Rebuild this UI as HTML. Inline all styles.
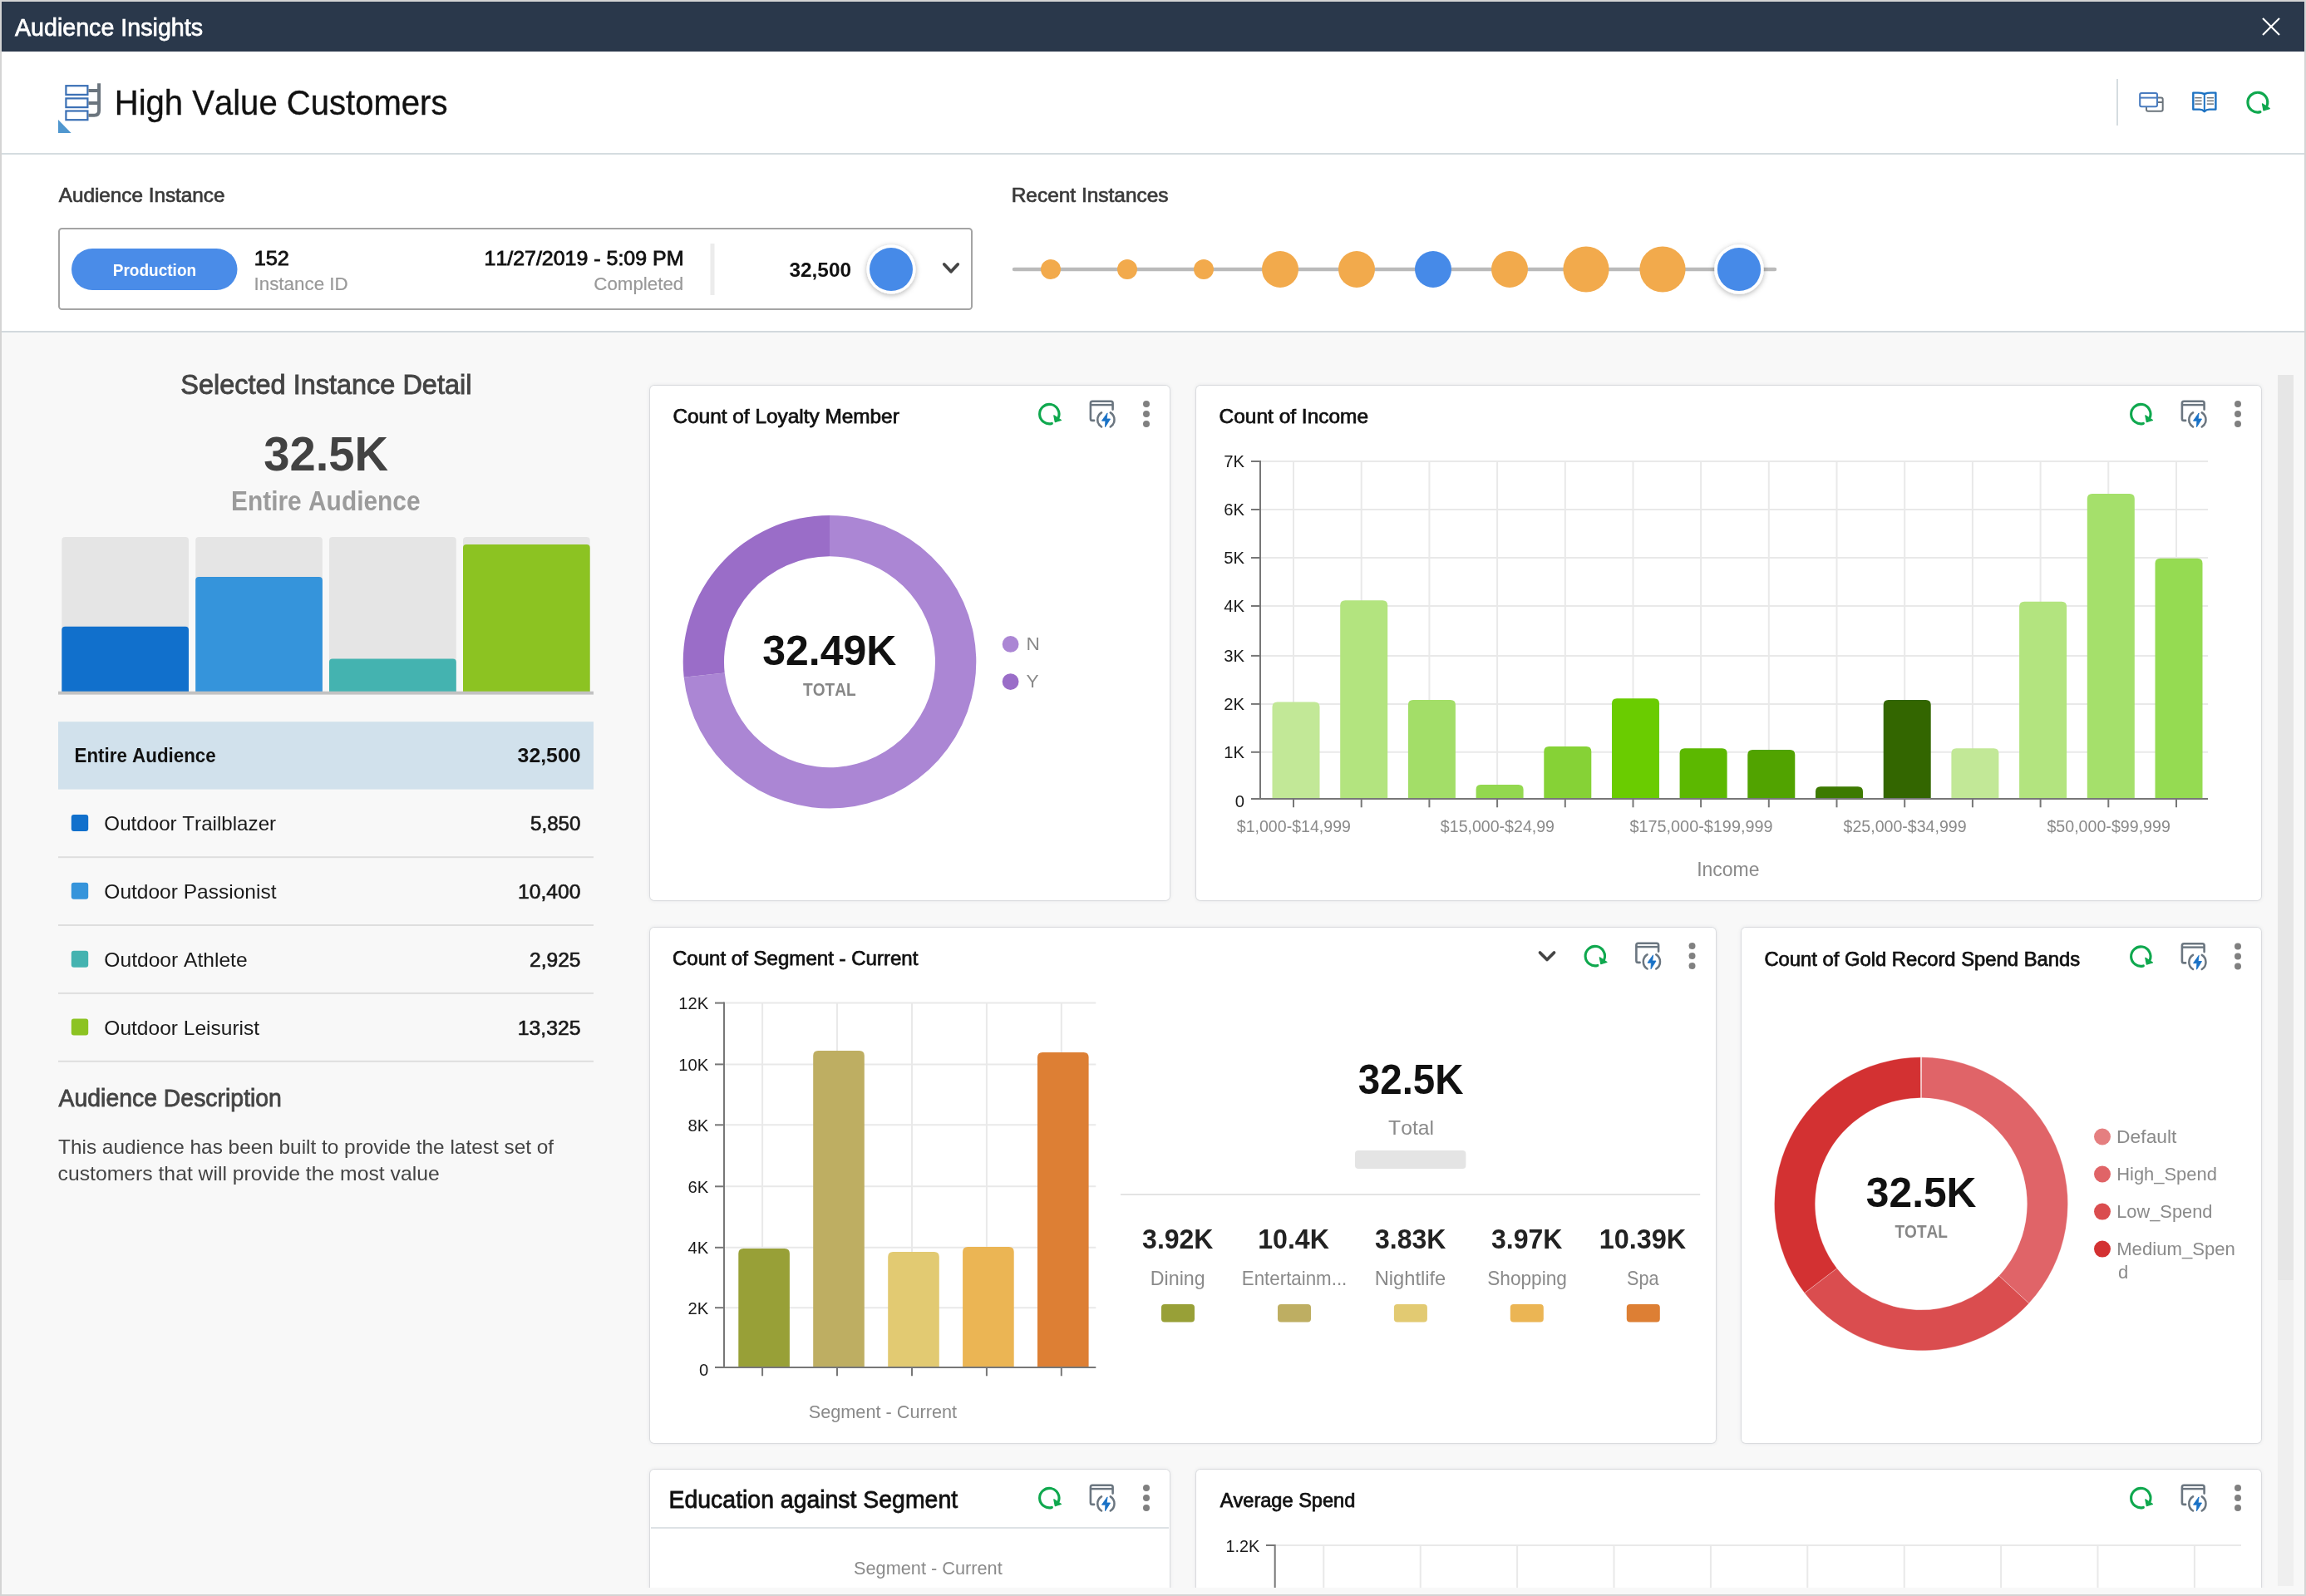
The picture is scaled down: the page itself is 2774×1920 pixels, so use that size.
<!DOCTYPE html>
<html><head><meta charset="utf-8"><title>Audience Insights</title>
<style>
html,body{margin:0;padding:0;}
body{width:2774px;height:1920px;position:relative;overflow:hidden;background:#d4d4d4;font-family:"Liberation Sans", sans-serif;}
.win{position:absolute;left:2px;top:2px;width:2770px;height:1916px;background:#f8f8f8;overflow:hidden;}
.titlebar{position:absolute;left:0;top:0;width:2770px;height:60px;background:#2a384b;}
.header{position:absolute;left:0;top:60px;width:2770px;height:122px;background:#fff;border-bottom:2px solid #d5dce0;}
.inst{position:absolute;left:0;top:184px;width:2770px;height:212px;background:#fff;border-bottom:2px solid #d2d9dd;}
.content{position:absolute;left:0;top:398px;width:2770px;height:1510px;overflow:hidden;}
.card{position:absolute;background:#fff;border-radius:5px;box-shadow:0 0 0 1px rgba(60,70,90,0.10),0 0 5px rgba(60,70,90,0.14);}
.sb{position:absolute;left:2738px;top:449px;width:19px;height:1089px;background:#e6e6e6;}
.sbt{position:absolute;left:2738px;top:1538px;width:19px;height:368px;background:#efefef;}
svg.ov{position:absolute;left:0;top:0;will-change:transform;}
svg.ov text{font-family:"Liberation Sans", sans-serif;font-kerning:none;}
</style></head>
<body>
<div class="win">
<div class="titlebar"></div>
<div class="header"></div>
<div class="inst"></div>
<div class="content">
<div style="position:absolute;left:-2px;top:-400px;width:2774px;height:1920px;">
<div class="card" style="left:782px;top:464px;width:625px;height:619px"></div>
<div class="card" style="left:1439px;top:464px;width:1281px;height:619px"></div>
<div class="card" style="left:782px;top:1116px;width:1282px;height:620px"></div>
<div class="card" style="left:2095px;top:1116px;width:625px;height:620px"></div>
<div class="card" style="left:782px;top:1768px;width:625px;height:192px"></div>
<div class="card" style="left:1439px;top:1768px;width:1281px;height:192px"></div>
</div>
</div>
<div class="sb"></div><div class="sbt"></div>
</div>
<svg class="ov" width="2774" height="1920" viewBox="0 0 2774 1920">
<defs><filter id="sh" x="-50%" y="-50%" width="200%" height="200%"><feDropShadow dx="0" dy="1.5" stdDeviation="3.2" flood-color="#000" flood-opacity="0.3"/></filter>
<clipPath id="cc"><rect x="0" y="400" width="2774" height="1510"/></clipPath></defs>
<g>
<text x="17.94" y="43.0" font-size="29.50" fill="#ffffff" textLength="226.09" lengthAdjust="spacingAndGlyphs" stroke="#ffffff" stroke-width="0.75">Audience Insights</text>
<line x1="2722.0" y1="22.0" x2="2742.0" y2="42.0" stroke="#ffffff" stroke-width="2.2" stroke-linecap="butt"/>
<line x1="2742.0" y1="22.0" x2="2722.0" y2="42.0" stroke="#ffffff" stroke-width="2.2" stroke-linecap="butt"/>
<rect x="79.4" y="103.2" width="26.0" height="10.7" fill="none" rx="0" stroke="#3b70b5" stroke-width="2.2"/>
<rect x="79.4" y="118.4" width="26.0" height="10.7" fill="none" rx="0" stroke="#3b70b5" stroke-width="2.2"/>
<rect x="79.4" y="133.5" width="26.0" height="10.7" fill="none" rx="0" stroke="#3b70b5" stroke-width="2.2"/>
<path d="M119.1,100.3 V133 Q119.1,138.7 113.4,138.7 H106.4" fill="none" stroke="#6b757e" stroke-width="4"/>
<line x1="106.4" y1="109.0" x2="119.1" y2="109.0" stroke="#6b757e" stroke-width="4" stroke-linecap="butt"/>
<line x1="106.4" y1="124.0" x2="119.1" y2="124.0" stroke="#6b757e" stroke-width="4" stroke-linecap="butt"/>
<path d="M70,144.1 L70,160 L85.6,160 Z" fill="#5097cf"/>
<text x="137.71" y="138.0" font-size="42.50" fill="#111111" textLength="400.73" lengthAdjust="spacingAndGlyphs" stroke="#111111" stroke-width="0.35">High Value Customers</text>
<rect x="2546.0" y="95.0" width="2.0" height="56.0" fill="#d5dce0" rx="0" />
<rect x="2582" y="117.5" width="19.7" height="16.2" rx="2" fill="none" stroke="#6b747c" stroke-width="2"/>
<line x1="2595.0" y1="123.0" x2="2601.7" y2="123.0" stroke="#6b747c" stroke-width="2" stroke-linecap="butt"/>
<rect x="2574.2" y="112" width="20.8" height="16.2" rx="2" fill="#ffffff" stroke="#4a7cc0" stroke-width="2.1"/>
<line x1="2574.2" y1="117.6" x2="2595.0" y2="117.6" stroke="#4a7cc0" stroke-width="2" stroke-linecap="butt"/>
<path d="M2651.8,113 Q2648,111.6 2644,111.6 H2638.3 V131.6 H2646 Q2649.5,131.6 2651.8,134.2 Q2654.1,131.6 2657.6,131.6 H2665.4 V111.6 H2659.6 Q2655.6,111.6 2651.8,113 Z" fill="none" stroke="#1d72c2" stroke-width="2.4" stroke-linejoin="round"/>
<line x1="2651.8" y1="113.0" x2="2651.8" y2="133.0" stroke="#1d72c2" stroke-width="2" stroke-linecap="butt"/>
<line x1="2640.3" y1="117.7" x2="2648.6" y2="117.7" stroke="#6b747c" stroke-width="1.5" stroke-linecap="butt"/>
<line x1="2654.8" y1="117.7" x2="2663.0" y2="117.7" stroke="#6b747c" stroke-width="1.5" stroke-linecap="butt"/>
<line x1="2640.3" y1="121.3" x2="2648.6" y2="121.3" stroke="#6b747c" stroke-width="1.5" stroke-linecap="butt"/>
<line x1="2654.8" y1="121.3" x2="2663.0" y2="121.3" stroke="#6b747c" stroke-width="1.5" stroke-linecap="butt"/>
<line x1="2640.3" y1="125.1" x2="2648.6" y2="125.1" stroke="#6b747c" stroke-width="1.5" stroke-linecap="butt"/>
<line x1="2654.8" y1="125.1" x2="2663.0" y2="125.1" stroke="#6b747c" stroke-width="1.5" stroke-linecap="butt"/>
<path d="M2718.93,134.65 A11.91,11.91 0 1 1 2726.89,127.61" fill="none" stroke="#0fa84e" stroke-width="3.16" stroke-linecap="round"/>
<path d="M2721.44,124.88 L2730.30,130.58 L2722.97,132.82 Z" fill="#0fa84e" stroke="#0fa84e" stroke-width="1.22" stroke-linejoin="round"/>
<text x="70.75" y="243.0" font-size="24.00" fill="#3a3a3a" textLength="199.73" lengthAdjust="spacingAndGlyphs" stroke="#3a3a3a" stroke-width="0.7">Audience Instance</text>
<rect x="71" y="275" width="1098" height="97" rx="3.5" fill="#ffffff" stroke="#a4a4a4" stroke-width="2"/>
<rect x="86.0" y="299.0" width="199.5" height="50.0" fill="#4a8ce8" rx="25" />
<text x="135.73" y="332.0" font-size="20.25" fill="#ffffff" textLength="100.45" lengthAdjust="spacingAndGlyphs" font-weight="bold">Production</text>
<text x="305.67" y="319.0" font-size="24.00" fill="#111111" textLength="42.20" lengthAdjust="spacingAndGlyphs" stroke="#111111" stroke-width="0.8">152</text>
<text x="305.54" y="349.0" font-size="22.00" fill="#999999" textLength="113.13" lengthAdjust="spacingAndGlyphs" stroke="#999999" stroke-width="0.2">Instance ID</text>
<text x="582.50" y="319.0" font-size="24.00" fill="#111111" textLength="239.95" lengthAdjust="spacingAndGlyphs" stroke="#111111" stroke-width="0.8">11/27/2019 - 5:09 PM</text>
<text x="714.27" y="349.0" font-size="22.00" fill="#999999" textLength="107.97" lengthAdjust="spacingAndGlyphs" stroke="#999999" stroke-width="0.2">Completed</text>
<rect x="854.5" y="293.0" width="5.0" height="62.0" fill="#ececec" rx="0" />
<text x="949.44" y="332.8" font-size="24.00" fill="#111111" textLength="74.56" lengthAdjust="spacingAndGlyphs" font-weight="bold">32,500</text>
<circle cx="1072.0" cy="324.0" r="29.5" fill="#ffffff" filter="url(#sh)"/>
<circle cx="1072.0" cy="324.0" r="26.0" fill="#468ae8" />
<path d="M1135.8,318 L1144,326.8 L1152.2,318" fill="none" stroke="#444" stroke-width="3.8" stroke-linecap="round" stroke-linejoin="round"/>
<text x="1216.69" y="243.0" font-size="24.00" fill="#3a3a3a" textLength="188.89" lengthAdjust="spacingAndGlyphs" stroke="#3a3a3a" stroke-width="0.7">Recent Instances</text>
<line x1="1220.0" y1="324.0" x2="2135.0" y2="324.0" stroke="#bababa" stroke-width="4.5" stroke-linecap="round"/>
<circle cx="1264.0" cy="324.0" r="12.0" fill="#f2aa4c" />
<circle cx="1356.0" cy="324.0" r="12.0" fill="#f2aa4c" />
<circle cx="1448.0" cy="324.0" r="12.0" fill="#f2aa4c" />
<circle cx="1540.0" cy="324.0" r="22.0" fill="#f2aa4c" />
<circle cx="1632.0" cy="324.0" r="22.0" fill="#f2aa4c" />
<circle cx="1724.0" cy="324.0" r="22.0" fill="#468ae8" />
<circle cx="1816.0" cy="324.0" r="22.0" fill="#f2aa4c" />
<circle cx="1908.0" cy="324.0" r="27.6" fill="#f2aa4c" />
<circle cx="2000.0" cy="324.0" r="27.6" fill="#f2aa4c" />
<circle cx="2092.0" cy="324.0" r="29.8" fill="#ffffff" filter="url(#sh)"/>
<circle cx="2092.0" cy="324.0" r="26.1" fill="#468ae8" />
<text x="217.28" y="473.8" font-size="33.25" fill="#444444" textLength="350.15" lengthAdjust="spacingAndGlyphs" stroke="#444444" stroke-width="0.9">Selected Instance Detail</text>
<text x="317.31" y="565.5" font-size="57.50" fill="#424242" textLength="149.81" lengthAdjust="spacingAndGlyphs" font-weight="bold">32.5K</text>
<text x="278.05" y="614.0" font-size="33.25" fill="#9b9b9b" textLength="227.52" lengthAdjust="spacingAndGlyphs" font-weight="bold">Entire Audience</text>
<path d="M74.3,832.0 V650.0 Q74.3,646.0 78.3,646.0 H223.0 Q227.0,646.0 227.0,650.0 V832.0 Z" fill="#e5e5e5"/>
<path d="M74.3,832.0 V757.7 Q74.3,753.7 78.3,753.7 H223.0 Q227.0,753.7 227.0,757.7 V832.0 Z" fill="#1170cc"/>
<path d="M235.2,832.0 V650.0 Q235.2,646.0 239.2,646.0 H383.9 Q387.9,646.0 387.9,650.0 V832.0 Z" fill="#e5e5e5"/>
<path d="M235.2,832.0 V698.0 Q235.2,694.0 239.2,694.0 H383.9 Q387.9,694.0 387.9,698.0 V832.0 Z" fill="#3594db"/>
<path d="M396.0,832.0 V650.0 Q396.0,646.0 400.0,646.0 H544.8 Q548.8,646.0 548.8,650.0 V832.0 Z" fill="#e5e5e5"/>
<path d="M396.0,832.0 V796.5 Q396.0,792.5 400.0,792.5 H544.8 Q548.8,792.5 548.8,796.5 V832.0 Z" fill="#44b3b0"/>
<path d="M557.0,832.0 V650.0 Q557.0,646.0 561.0,646.0 H705.7 Q709.7,646.0 709.7,650.0 V832.0 Z" fill="#e5e5e5"/>
<path d="M557.0,832.0 V659.0 Q557.0,655.0 561.0,655.0 H705.7 Q709.7,655.0 709.7,659.0 V832.0 Z" fill="#8cc322"/>
<rect x="70.0" y="831.7" width="644.0" height="3.9" fill="#c2c2c2" rx="0" />
<rect x="70.0" y="868.2" width="644.0" height="81.4" fill="#d1e1ec" rx="0" />
<text x="89.50" y="917.4" font-size="24.00" fill="#111111" textLength="170.26" lengthAdjust="spacingAndGlyphs" font-weight="bold">Entire Audience</text>
<text x="622.63" y="917.4" font-size="24.00" fill="#111111" textLength="75.89" lengthAdjust="spacingAndGlyphs" font-weight="bold">32,500</text>
<rect x="85.8" y="980.0" width="20.4" height="20.0" fill="#1170cc" rx="3" />
<text x="125.36" y="999.4" font-size="24.00" fill="#1a1a1a" textLength="206.75" lengthAdjust="spacingAndGlyphs">Outdoor Trailblazer</text>
<text x="638.03" y="999.4" font-size="24.00" fill="#1a1a1a" textLength="60.41" lengthAdjust="spacingAndGlyphs" stroke="#1a1a1a" stroke-width="0.65">5,850</text>
<rect x="70.0" y="1030.2" width="644.0" height="2.0" fill="#dedede" rx="0" />
<rect x="85.8" y="1061.8" width="20.4" height="20.0" fill="#3594db" rx="3" />
<text x="125.34" y="1081.2" font-size="24.00" fill="#1a1a1a" textLength="207.14" lengthAdjust="spacingAndGlyphs">Outdoor Passionist</text>
<text x="623.12" y="1081.2" font-size="24.00" fill="#1a1a1a" textLength="75.34" lengthAdjust="spacingAndGlyphs" stroke="#1a1a1a" stroke-width="0.65">10,400</text>
<rect x="70.0" y="1112.0" width="644.0" height="2.0" fill="#dedede" rx="0" />
<rect x="85.8" y="1143.7" width="20.4" height="20.0" fill="#44b3b0" rx="3" />
<text x="125.34" y="1163.1" font-size="24.00" fill="#1a1a1a" textLength="172.26" lengthAdjust="spacingAndGlyphs">Outdoor Athlete</text>
<text x="637.06" y="1163.1" font-size="24.00" fill="#1a1a1a" textLength="61.47" lengthAdjust="spacingAndGlyphs" stroke="#1a1a1a" stroke-width="0.65">2,925</text>
<rect x="70.0" y="1193.9" width="644.0" height="2.0" fill="#dedede" rx="0" />
<rect x="85.8" y="1225.5" width="20.4" height="20.0" fill="#8cc322" rx="3" />
<text x="125.34" y="1245.0" font-size="24.00" fill="#1a1a1a" textLength="186.84" lengthAdjust="spacingAndGlyphs">Outdoor Leisurist</text>
<text x="622.81" y="1245.0" font-size="24.00" fill="#1a1a1a" textLength="75.73" lengthAdjust="spacingAndGlyphs" stroke="#1a1a1a" stroke-width="0.65">13,325</text>
<rect x="70.0" y="1275.8" width="644.0" height="2.0" fill="#dedede" rx="0" />
<text x="70.54" y="1331.0" font-size="29.50" fill="#444444" textLength="268.40" lengthAdjust="spacingAndGlyphs" stroke="#444444" stroke-width="0.8">Audience Description</text>
<text x="70.05" y="1387.8" font-size="24.00" fill="#444444" textLength="596.01" lengthAdjust="spacingAndGlyphs">This audience has been built to provide the latest set of</text>
<text x="69.55" y="1420.3" font-size="24.00" fill="#444444" textLength="459.15" lengthAdjust="spacingAndGlyphs">customers that will provide the most value</text>
<text x="809.46" y="509.3" font-size="24.00" fill="#111111" textLength="272.34" lengthAdjust="spacingAndGlyphs" stroke="#111111" stroke-width="0.75">Count of Loyalty Member</text>
<path d="M1265.33,509.40 A11.70,11.70 0 1 1 1273.15,502.48" fill="none" stroke="#0fa84e" stroke-width="3.10" stroke-linecap="round"/>
<path d="M1267.80,499.80 L1276.50,505.40 L1269.30,507.60 Z" fill="#0fa84e" stroke="#0fa84e" stroke-width="1.20" stroke-linejoin="round"/>
<path d="M1316.10,505.90 H1314.10 Q1311.90,505.90 1311.90,503.70 V485.00 Q1311.90,482.80 1314.10,482.80 H1336.40 Q1338.60,482.80 1338.60,485.00 V492.60" fill="none" stroke="#6b7680" stroke-width="2.6" stroke-linecap="round" stroke-linejoin="round"/>
<line x1="1311.9" y1="487.1" x2="1338.6" y2="487.1" stroke="#6b7680" stroke-width="2.4" stroke-linecap="butt"/>
<path d="M1325.05,513.47 A10.1,10.1 0 0 1 1325.05,496.33" fill="none" stroke="#6b7680" stroke-width="2.5" stroke-linecap="round"/>
<path d="M1335.75,496.33 A10.1,10.1 0 0 1 1335.75,513.47" fill="none" stroke="#6b7680" stroke-width="2.5" stroke-linecap="round"/>
<path d="M1332.10,496.90 L1325.50,506.20 L1329.90,506.20 L1329.50,513.70 L1335.50,504.00 L1331.10,504.00 Z" fill="#1a72c6" stroke="#1a72c6" stroke-width="0.9" stroke-linejoin="round"/>
<circle cx="1379.0" cy="486.0" r="4.0" fill="#808080" />
<circle cx="1379.0" cy="498.0" r="4.0" fill="#808080" />
<circle cx="1379.0" cy="510.0" r="4.0" fill="#808080" />
<path d="M998.00,619.90 A176.3,176.3 0 1 1 822.67,814.63 L871.70,809.48 A127,127 0 1 0 998.00,669.20 Z" fill="#ab86d4"/>
<path d="M822.67,814.63 A176.3,176.3 0 0 1 998.00,619.90 L998.00,669.20 A127,127 0 0 0 871.70,809.48 Z" fill="#9a6dc8"/>
<text x="917.30" y="800.0" font-size="50.00" fill="#111111" textLength="161.11" lengthAdjust="spacingAndGlyphs" font-weight="bold">32.49K</text>
<text x="966.09" y="837.0" font-size="22.00" fill="#878787" textLength="63.60" lengthAdjust="spacingAndGlyphs" font-weight="bold">TOTAL</text>
<circle cx="1215.6" cy="774.9" r="9.9" fill="#ab86d4" />
<circle cx="1215.6" cy="820.1" r="9.9" fill="#9a6dc8" />
<text x="1234.5" y="782.0" font-size="22.67" fill="#8a8a8a">N</text>
<text x="1234.5" y="827.2" font-size="22.67" fill="#8a8a8a">Y</text>
<text x="1466.56" y="508.7" font-size="24.00" fill="#111111" textLength="179.53" lengthAdjust="spacingAndGlyphs" stroke="#111111" stroke-width="0.75">Count of Income</text>
<path d="M2578.33,509.40 A11.70,11.70 0 1 1 2586.15,502.48" fill="none" stroke="#0fa84e" stroke-width="3.10" stroke-linecap="round"/>
<path d="M2580.80,499.80 L2589.50,505.40 L2582.30,507.60 Z" fill="#0fa84e" stroke="#0fa84e" stroke-width="1.20" stroke-linejoin="round"/>
<path d="M2629.10,505.90 H2627.10 Q2624.90,505.90 2624.90,503.70 V485.00 Q2624.90,482.80 2627.10,482.80 H2649.40 Q2651.60,482.80 2651.60,485.00 V492.60" fill="none" stroke="#6b7680" stroke-width="2.6" stroke-linecap="round" stroke-linejoin="round"/>
<line x1="2624.9" y1="487.1" x2="2651.6" y2="487.1" stroke="#6b7680" stroke-width="2.4" stroke-linecap="butt"/>
<path d="M2638.05,513.47 A10.1,10.1 0 0 1 2638.05,496.33" fill="none" stroke="#6b7680" stroke-width="2.5" stroke-linecap="round"/>
<path d="M2648.75,496.33 A10.1,10.1 0 0 1 2648.75,513.47" fill="none" stroke="#6b7680" stroke-width="2.5" stroke-linecap="round"/>
<path d="M2645.10,496.90 L2638.50,506.20 L2642.90,506.20 L2642.50,513.70 L2648.50,504.00 L2644.10,504.00 Z" fill="#1a72c6" stroke="#1a72c6" stroke-width="0.9" stroke-linejoin="round"/>
<circle cx="2692.0" cy="486.0" r="4.0" fill="#808080" />
<circle cx="2692.0" cy="498.0" r="4.0" fill="#808080" />
<circle cx="2692.0" cy="510.0" r="4.0" fill="#808080" />
<line x1="1517.0" y1="904.8" x2="2656.0" y2="904.8" stroke="#e9e9e9" stroke-width="2" stroke-linecap="butt"/>
<line x1="1517.0" y1="846.9" x2="2656.0" y2="846.9" stroke="#e9e9e9" stroke-width="2" stroke-linecap="butt"/>
<line x1="1517.0" y1="788.9" x2="2656.0" y2="788.9" stroke="#e9e9e9" stroke-width="2" stroke-linecap="butt"/>
<line x1="1517.0" y1="729.0" x2="2656.0" y2="729.0" stroke="#e9e9e9" stroke-width="2" stroke-linecap="butt"/>
<line x1="1517.0" y1="671.0" x2="2656.0" y2="671.0" stroke="#e9e9e9" stroke-width="2" stroke-linecap="butt"/>
<line x1="1517.0" y1="613.0" x2="2656.0" y2="613.0" stroke="#e9e9e9" stroke-width="2" stroke-linecap="butt"/>
<line x1="1517.0" y1="555.0" x2="2656.0" y2="555.0" stroke="#e9e9e9" stroke-width="2" stroke-linecap="butt"/>
<line x1="1556.0" y1="555.0" x2="1556.0" y2="961.1" stroke="#e9e9e9" stroke-width="2" stroke-linecap="butt"/>
<line x1="1637.7" y1="555.0" x2="1637.7" y2="961.1" stroke="#e9e9e9" stroke-width="2" stroke-linecap="butt"/>
<line x1="1719.4" y1="555.0" x2="1719.4" y2="961.1" stroke="#e9e9e9" stroke-width="2" stroke-linecap="butt"/>
<line x1="1801.1" y1="555.0" x2="1801.1" y2="961.1" stroke="#e9e9e9" stroke-width="2" stroke-linecap="butt"/>
<line x1="1882.8" y1="555.0" x2="1882.8" y2="961.1" stroke="#e9e9e9" stroke-width="2" stroke-linecap="butt"/>
<line x1="1964.5" y1="555.0" x2="1964.5" y2="961.1" stroke="#e9e9e9" stroke-width="2" stroke-linecap="butt"/>
<line x1="2046.1" y1="555.0" x2="2046.1" y2="961.1" stroke="#e9e9e9" stroke-width="2" stroke-linecap="butt"/>
<line x1="2127.8" y1="555.0" x2="2127.8" y2="961.1" stroke="#e9e9e9" stroke-width="2" stroke-linecap="butt"/>
<line x1="2209.5" y1="555.0" x2="2209.5" y2="961.1" stroke="#e9e9e9" stroke-width="2" stroke-linecap="butt"/>
<line x1="2291.2" y1="555.0" x2="2291.2" y2="961.1" stroke="#e9e9e9" stroke-width="2" stroke-linecap="butt"/>
<line x1="2372.9" y1="555.0" x2="2372.9" y2="961.1" stroke="#e9e9e9" stroke-width="2" stroke-linecap="butt"/>
<line x1="2454.6" y1="555.0" x2="2454.6" y2="961.1" stroke="#e9e9e9" stroke-width="2" stroke-linecap="butt"/>
<line x1="2536.3" y1="555.0" x2="2536.3" y2="961.1" stroke="#e9e9e9" stroke-width="2" stroke-linecap="butt"/>
<line x1="2618.0" y1="555.0" x2="2618.0" y2="961.1" stroke="#e9e9e9" stroke-width="2" stroke-linecap="butt"/>
<path d="M1530.5,961.1 V850.5 Q1530.5,844.5 1536.5,844.5 H1581.5 Q1587.5,844.5 1587.5,850.5 V961.1 Z" fill="#c2e897"/>
<path d="M1612.2,961.1 V728.2 Q1612.2,722.2 1618.2,722.2 H1663.2 Q1669.2,722.2 1669.2,728.2 V961.1 Z" fill="#b3e47f"/>
<path d="M1693.9,961.1 V847.9 Q1693.9,841.9 1699.9,841.9 H1744.9 Q1750.9,841.9 1750.9,847.9 V961.1 Z" fill="#a3de68"/>
<path d="M1775.6,961.1 V950.0 Q1775.6,944.0 1781.6,944.0 H1826.6 Q1832.6,944.0 1832.6,950.0 V961.1 Z" fill="#93d84f"/>
<path d="M1857.3,961.1 V904.0 Q1857.3,898.0 1863.3,898.0 H1908.3 Q1914.3,898.0 1914.3,904.0 V961.1 Z" fill="#86d236"/>
<path d="M1939.0,961.1 V846.2 Q1939.0,840.2 1945.0,840.2 H1990.0 Q1996.0,840.2 1996.0,846.2 V961.1 Z" fill="#6acc00"/>
<path d="M2020.6,961.1 V906.3 Q2020.6,900.3 2026.6,900.3 H2071.6 Q2077.6,900.3 2077.6,906.3 V961.1 Z" fill="#5cb800"/>
<path d="M2102.3,961.1 V908.0 Q2102.3,902.0 2108.3,902.0 H2153.3 Q2159.3,902.0 2159.3,908.0 V961.1 Z" fill="#51a300"/>
<path d="M2184.0,961.1 V952.2 Q2184.0,946.2 2190.0,946.2 H2235.0 Q2241.0,946.2 2241.0,952.2 V961.1 Z" fill="#3d7a00"/>
<path d="M2265.7,961.1 V848.0 Q2265.7,842.0 2271.7,842.0 H2316.7 Q2322.7,842.0 2322.7,848.0 V961.1 Z" fill="#336600"/>
<path d="M2347.4,961.1 V906.3 Q2347.4,900.3 2353.4,900.3 H2398.4 Q2404.4,900.3 2404.4,906.3 V961.1 Z" fill="#c2e897"/>
<path d="M2429.1,961.1 V729.8 Q2429.1,723.8 2435.1,723.8 H2480.1 Q2486.1,723.8 2486.1,729.8 V961.1 Z" fill="#b3e47f"/>
<path d="M2510.8,961.1 V600.0 Q2510.8,594.0 2516.8,594.0 H2561.8 Q2567.8,594.0 2567.8,600.0 V961.1 Z" fill="#a5e06b"/>
<path d="M2592.5,961.1 V677.7 Q2592.5,671.7 2598.5,671.7 H2643.5 Q2649.5,671.7 2649.5,677.7 V961.1 Z" fill="#95db52"/>
<line x1="1505.0" y1="961.1" x2="1516.0" y2="961.1" stroke="#777777" stroke-width="2" stroke-linecap="butt"/>
<text x="1497.0" y="970.7" font-size="20.25" fill="#1a1a1a" text-anchor="end">0</text>
<line x1="1505.0" y1="904.8" x2="1516.0" y2="904.8" stroke="#777777" stroke-width="2" stroke-linecap="butt"/>
<text x="1497.0" y="911.6" font-size="20.25" fill="#1a1a1a" text-anchor="end">1K</text>
<line x1="1505.0" y1="846.9" x2="1516.0" y2="846.9" stroke="#777777" stroke-width="2" stroke-linecap="butt"/>
<text x="1497.0" y="853.7" font-size="20.25" fill="#1a1a1a" text-anchor="end">2K</text>
<line x1="1505.0" y1="788.9" x2="1516.0" y2="788.9" stroke="#777777" stroke-width="2" stroke-linecap="butt"/>
<text x="1497.0" y="795.7" font-size="20.25" fill="#1a1a1a" text-anchor="end">3K</text>
<line x1="1505.0" y1="729.0" x2="1516.0" y2="729.0" stroke="#777777" stroke-width="2" stroke-linecap="butt"/>
<text x="1497.0" y="735.8" font-size="20.25" fill="#1a1a1a" text-anchor="end">4K</text>
<line x1="1505.0" y1="671.0" x2="1516.0" y2="671.0" stroke="#777777" stroke-width="2" stroke-linecap="butt"/>
<text x="1497.0" y="677.8" font-size="20.25" fill="#1a1a1a" text-anchor="end">5K</text>
<line x1="1505.0" y1="613.0" x2="1516.0" y2="613.0" stroke="#777777" stroke-width="2" stroke-linecap="butt"/>
<text x="1497.0" y="619.8" font-size="20.25" fill="#1a1a1a" text-anchor="end">6K</text>
<line x1="1505.0" y1="555.0" x2="1516.0" y2="555.0" stroke="#777777" stroke-width="2" stroke-linecap="butt"/>
<text x="1497.0" y="561.8" font-size="20.25" fill="#1a1a1a" text-anchor="end">7K</text>
<line x1="1516.0" y1="554.0" x2="1516.0" y2="962.1" stroke="#777777" stroke-width="2" stroke-linecap="butt"/>
<line x1="1505.0" y1="961.1" x2="2656.0" y2="961.1" stroke="#777777" stroke-width="2" stroke-linecap="butt"/>
<line x1="1556.0" y1="961.1" x2="1556.0" y2="971.3" stroke="#777777" stroke-width="2" stroke-linecap="butt"/>
<line x1="1637.7" y1="961.1" x2="1637.7" y2="971.3" stroke="#777777" stroke-width="2" stroke-linecap="butt"/>
<line x1="1719.4" y1="961.1" x2="1719.4" y2="971.3" stroke="#777777" stroke-width="2" stroke-linecap="butt"/>
<line x1="1801.1" y1="961.1" x2="1801.1" y2="971.3" stroke="#777777" stroke-width="2" stroke-linecap="butt"/>
<line x1="1882.8" y1="961.1" x2="1882.8" y2="971.3" stroke="#777777" stroke-width="2" stroke-linecap="butt"/>
<line x1="1964.5" y1="961.1" x2="1964.5" y2="971.3" stroke="#777777" stroke-width="2" stroke-linecap="butt"/>
<line x1="2046.1" y1="961.1" x2="2046.1" y2="971.3" stroke="#777777" stroke-width="2" stroke-linecap="butt"/>
<line x1="2127.8" y1="961.1" x2="2127.8" y2="971.3" stroke="#777777" stroke-width="2" stroke-linecap="butt"/>
<line x1="2209.5" y1="961.1" x2="2209.5" y2="971.3" stroke="#777777" stroke-width="2" stroke-linecap="butt"/>
<line x1="2291.2" y1="961.1" x2="2291.2" y2="971.3" stroke="#777777" stroke-width="2" stroke-linecap="butt"/>
<line x1="2372.9" y1="961.1" x2="2372.9" y2="971.3" stroke="#777777" stroke-width="2" stroke-linecap="butt"/>
<line x1="2454.6" y1="961.1" x2="2454.6" y2="971.3" stroke="#777777" stroke-width="2" stroke-linecap="butt"/>
<line x1="2536.3" y1="961.1" x2="2536.3" y2="971.3" stroke="#777777" stroke-width="2" stroke-linecap="butt"/>
<line x1="2618.0" y1="961.1" x2="2618.0" y2="971.3" stroke="#777777" stroke-width="2" stroke-linecap="butt"/>
<text x="1487.79" y="1001.0" font-size="20.25" fill="#8a8a8a" textLength="137.14" lengthAdjust="spacingAndGlyphs">$1,000-$14,999</text>
<text x="1732.86" y="1001.0" font-size="20.25" fill="#8a8a8a" textLength="137.14" lengthAdjust="spacingAndGlyphs">$15,000-$24,99</text>
<text x="1960.43" y="1001.0" font-size="20.25" fill="#8a8a8a" textLength="172.15" lengthAdjust="spacingAndGlyphs">$175,000-$199,999</text>
<text x="2217.50" y="1001.0" font-size="20.25" fill="#8a8a8a" textLength="148.14" lengthAdjust="spacingAndGlyphs">$25,000-$34,999</text>
<text x="2462.42" y="1001.0" font-size="20.25" fill="#8a8a8a" textLength="148.44" lengthAdjust="spacingAndGlyphs">$50,000-$99,999</text>
<text x="2041.18" y="1054.4" font-size="23.40" fill="#8a8a8a" textLength="75.34" lengthAdjust="spacingAndGlyphs">Income</text>
<text x="808.98" y="1161.0" font-size="24.00" fill="#111111" textLength="295.40" lengthAdjust="spacingAndGlyphs" stroke="#111111" stroke-width="0.75">Count of Segment - Current</text>
<path d="M1921.83,1161.40 A11.70,11.70 0 1 1 1929.65,1154.48" fill="none" stroke="#0fa84e" stroke-width="3.10" stroke-linecap="round"/>
<path d="M1924.30,1151.80 L1933.00,1157.40 L1925.80,1159.60 Z" fill="#0fa84e" stroke="#0fa84e" stroke-width="1.20" stroke-linejoin="round"/>
<path d="M1972.60,1157.90 H1970.60 Q1968.40,1157.90 1968.40,1155.70 V1137.00 Q1968.40,1134.80 1970.60,1134.80 H1992.90 Q1995.10,1134.80 1995.10,1137.00 V1144.60" fill="none" stroke="#6b7680" stroke-width="2.6" stroke-linecap="round" stroke-linejoin="round"/>
<line x1="1968.4" y1="1139.1" x2="1995.1" y2="1139.1" stroke="#6b7680" stroke-width="2.4" stroke-linecap="butt"/>
<path d="M1981.55,1165.47 A10.1,10.1 0 0 1 1981.55,1148.33" fill="none" stroke="#6b7680" stroke-width="2.5" stroke-linecap="round"/>
<path d="M1992.25,1148.33 A10.1,10.1 0 0 1 1992.25,1165.47" fill="none" stroke="#6b7680" stroke-width="2.5" stroke-linecap="round"/>
<path d="M1988.60,1148.90 L1982.00,1158.20 L1986.40,1158.20 L1986.00,1165.70 L1992.00,1156.00 L1987.60,1156.00 Z" fill="#1a72c6" stroke="#1a72c6" stroke-width="0.9" stroke-linejoin="round"/>
<circle cx="2035.5" cy="1138.0" r="4.0" fill="#808080" />
<circle cx="2035.5" cy="1150.0" r="4.0" fill="#808080" />
<circle cx="2035.5" cy="1162.0" r="4.0" fill="#808080" />
<path d="M1852.5,1146.0 L1861.0,1154.5 L1869.5,1146.0" fill="none" stroke="#444" stroke-width="3.8" stroke-linecap="round" stroke-linejoin="round"/>
<line x1="872.0" y1="1573.2" x2="1318.3" y2="1573.2" stroke="#e9e9e9" stroke-width="2" stroke-linecap="butt"/>
<line x1="872.0" y1="1500.8" x2="1318.3" y2="1500.8" stroke="#e9e9e9" stroke-width="2" stroke-linecap="butt"/>
<line x1="872.0" y1="1427.3" x2="1318.3" y2="1427.3" stroke="#e9e9e9" stroke-width="2" stroke-linecap="butt"/>
<line x1="872.0" y1="1353.3" x2="1318.3" y2="1353.3" stroke="#e9e9e9" stroke-width="2" stroke-linecap="butt"/>
<line x1="872.0" y1="1280.4" x2="1318.3" y2="1280.4" stroke="#e9e9e9" stroke-width="2" stroke-linecap="butt"/>
<line x1="872.0" y1="1206.6" x2="1318.3" y2="1206.6" stroke="#e9e9e9" stroke-width="2" stroke-linecap="butt"/>
<line x1="917.1" y1="1206.6" x2="917.1" y2="1644.9" stroke="#e9e9e9" stroke-width="2" stroke-linecap="butt"/>
<line x1="1007.0" y1="1206.6" x2="1007.0" y2="1644.9" stroke="#e9e9e9" stroke-width="2" stroke-linecap="butt"/>
<line x1="1097.0" y1="1206.6" x2="1097.0" y2="1644.9" stroke="#e9e9e9" stroke-width="2" stroke-linecap="butt"/>
<line x1="1186.9" y1="1206.6" x2="1186.9" y2="1644.9" stroke="#e9e9e9" stroke-width="2" stroke-linecap="butt"/>
<line x1="1276.8" y1="1206.6" x2="1276.8" y2="1644.9" stroke="#e9e9e9" stroke-width="2" stroke-linecap="butt"/>
<path d="M888.3,1644.9 V1507.9 Q888.3,1501.9 894.3,1501.9 H943.9 Q949.9,1501.9 949.9,1507.9 V1644.9 Z" fill="#98a037"/>
<path d="M978.2,1644.9 V1270.0 Q978.2,1264.0 984.2,1264.0 H1033.8 Q1039.8,1264.0 1039.8,1270.0 V1644.9 Z" fill="#beae62"/>
<path d="M1068.2,1644.9 V1512.0 Q1068.2,1506.0 1074.2,1506.0 H1123.8 Q1129.8,1506.0 1129.8,1512.0 V1644.9 Z" fill="#e2ca72"/>
<path d="M1158.1,1644.9 V1506.0 Q1158.1,1500.0 1164.1,1500.0 H1213.7 Q1219.7,1500.0 1219.7,1506.0 V1644.9 Z" fill="#ebb554"/>
<path d="M1248.0,1644.9 V1272.0 Q1248.0,1266.0 1254.0,1266.0 H1303.6 Q1309.6,1266.0 1309.6,1272.0 V1644.9 Z" fill="#dd7f34"/>
<line x1="860.0" y1="1644.9" x2="871.0" y2="1644.9" stroke="#777777" stroke-width="2" stroke-linecap="butt"/>
<text x="852.3" y="1654.8" font-size="20.25" fill="#1a1a1a" text-anchor="end">0</text>
<line x1="860.0" y1="1573.2" x2="871.0" y2="1573.2" stroke="#777777" stroke-width="2" stroke-linecap="butt"/>
<text x="852.3" y="1580.8" font-size="20.25" fill="#1a1a1a" text-anchor="end">2K</text>
<line x1="860.0" y1="1500.8" x2="871.0" y2="1500.8" stroke="#777777" stroke-width="2" stroke-linecap="butt"/>
<text x="852.3" y="1508.4" font-size="20.25" fill="#1a1a1a" text-anchor="end">4K</text>
<line x1="860.0" y1="1427.3" x2="871.0" y2="1427.3" stroke="#777777" stroke-width="2" stroke-linecap="butt"/>
<text x="852.3" y="1434.9" font-size="20.25" fill="#1a1a1a" text-anchor="end">6K</text>
<line x1="860.0" y1="1353.3" x2="871.0" y2="1353.3" stroke="#777777" stroke-width="2" stroke-linecap="butt"/>
<text x="852.3" y="1360.9" font-size="20.25" fill="#1a1a1a" text-anchor="end">8K</text>
<line x1="860.0" y1="1280.4" x2="871.0" y2="1280.4" stroke="#777777" stroke-width="2" stroke-linecap="butt"/>
<text x="852.3" y="1288.0" font-size="20.25" fill="#1a1a1a" text-anchor="end">10K</text>
<line x1="860.0" y1="1206.6" x2="871.0" y2="1206.6" stroke="#777777" stroke-width="2" stroke-linecap="butt"/>
<text x="852.3" y="1214.2" font-size="20.25" fill="#1a1a1a" text-anchor="end">12K</text>
<line x1="871.0" y1="1205.6" x2="871.0" y2="1645.9" stroke="#777777" stroke-width="2" stroke-linecap="butt"/>
<line x1="860.0" y1="1644.9" x2="1318.3" y2="1644.9" stroke="#777777" stroke-width="2" stroke-linecap="butt"/>
<line x1="917.1" y1="1644.9" x2="917.1" y2="1655.3" stroke="#777777" stroke-width="2" stroke-linecap="butt"/>
<line x1="1007.0" y1="1644.9" x2="1007.0" y2="1655.3" stroke="#777777" stroke-width="2" stroke-linecap="butt"/>
<line x1="1097.0" y1="1644.9" x2="1097.0" y2="1655.3" stroke="#777777" stroke-width="2" stroke-linecap="butt"/>
<line x1="1186.9" y1="1644.9" x2="1186.9" y2="1655.3" stroke="#777777" stroke-width="2" stroke-linecap="butt"/>
<line x1="1276.8" y1="1644.9" x2="1276.8" y2="1655.3" stroke="#777777" stroke-width="2" stroke-linecap="butt"/>
<text x="972.66" y="1706.0" font-size="22.00" fill="#8a8a8a" textLength="178.44" lengthAdjust="spacingAndGlyphs">Segment - Current</text>
<text x="1633.86" y="1316.0" font-size="50.00" fill="#111111" textLength="126.63" lengthAdjust="spacingAndGlyphs" font-weight="bold">32.5K</text>
<text x="1670.10" y="1365.3" font-size="24.00" fill="#8a8a8a" textLength="54.91" lengthAdjust="spacingAndGlyphs">Total</text>
<rect x="1630.0" y="1384.0" width="133.4" height="22.0" fill="#e4e4e4" rx="4" />
<rect x="1348.0" y="1436.0" width="697.2" height="2.0" fill="#e3e3e3" rx="0" />
<text x="1374.12" y="1501.8" font-size="33.25" fill="#222222" textLength="85.33" lengthAdjust="spacingAndGlyphs" font-weight="bold">3.92K</text>
<text x="1383.84" y="1545.7" font-size="24.00" fill="#8a8a8a" textLength="65.91" lengthAdjust="spacingAndGlyphs">Dining</text>
<rect x="1397.0" y="1569.0" width="40.0" height="21.6" fill="#98a037" rx="4" />
<text x="1513.17" y="1501.8" font-size="33.25" fill="#222222" textLength="85.82" lengthAdjust="spacingAndGlyphs" font-weight="bold">10.4K</text>
<text x="1493.82" y="1545.7" font-size="24.00" fill="#8a8a8a" textLength="126.47" lengthAdjust="spacingAndGlyphs">Entertainm...</text>
<rect x="1537.0" y="1569.0" width="40.0" height="21.6" fill="#beae62" rx="4" />
<text x="1654.02" y="1501.8" font-size="33.25" fill="#222222" textLength="85.33" lengthAdjust="spacingAndGlyphs" font-weight="bold">3.83K</text>
<text x="1653.66" y="1545.7" font-size="24.00" fill="#8a8a8a" textLength="85.60" lengthAdjust="spacingAndGlyphs">Nightlife</text>
<rect x="1676.9" y="1569.0" width="40.0" height="21.6" fill="#e2ca72" rx="4" />
<text x="1793.97" y="1501.8" font-size="33.25" fill="#222222" textLength="85.33" lengthAdjust="spacingAndGlyphs" font-weight="bold">3.97K</text>
<text x="1789.17" y="1545.7" font-size="24.00" fill="#8a8a8a" textLength="95.79" lengthAdjust="spacingAndGlyphs">Shopping</text>
<rect x="1816.8" y="1569.0" width="40.0" height="21.6" fill="#ebb554" rx="4" />
<text x="1923.66" y="1501.8" font-size="33.25" fill="#222222" textLength="104.54" lengthAdjust="spacingAndGlyphs" font-weight="bold">10.39K</text>
<text x="1957.07" y="1545.7" font-size="24.00" fill="#8a8a8a" textLength="38.48" lengthAdjust="spacingAndGlyphs">Spa</text>
<rect x="1956.8" y="1569.0" width="40.0" height="21.6" fill="#dd7f34" rx="4" />
<text x="2122.39" y="1161.7" font-size="24.00" fill="#111111" textLength="379.77" lengthAdjust="spacingAndGlyphs" stroke="#111111" stroke-width="0.75">Count of Gold Record Spend Bands</text>
<path d="M2578.33,1161.90 A11.70,11.70 0 1 1 2586.15,1154.98" fill="none" stroke="#0fa84e" stroke-width="3.10" stroke-linecap="round"/>
<path d="M2580.80,1152.30 L2589.50,1157.90 L2582.30,1160.10 Z" fill="#0fa84e" stroke="#0fa84e" stroke-width="1.20" stroke-linejoin="round"/>
<path d="M2629.10,1158.40 H2627.10 Q2624.90,1158.40 2624.90,1156.20 V1137.50 Q2624.90,1135.30 2627.10,1135.30 H2649.40 Q2651.60,1135.30 2651.60,1137.50 V1145.10" fill="none" stroke="#6b7680" stroke-width="2.6" stroke-linecap="round" stroke-linejoin="round"/>
<line x1="2624.9" y1="1139.6" x2="2651.6" y2="1139.6" stroke="#6b7680" stroke-width="2.4" stroke-linecap="butt"/>
<path d="M2638.05,1165.97 A10.1,10.1 0 0 1 2638.05,1148.83" fill="none" stroke="#6b7680" stroke-width="2.5" stroke-linecap="round"/>
<path d="M2648.75,1148.83 A10.1,10.1 0 0 1 2648.75,1165.97" fill="none" stroke="#6b7680" stroke-width="2.5" stroke-linecap="round"/>
<path d="M2645.10,1149.40 L2638.50,1158.70 L2642.90,1158.70 L2642.50,1166.20 L2648.50,1156.50 L2644.10,1156.50 Z" fill="#1a72c6" stroke="#1a72c6" stroke-width="0.9" stroke-linejoin="round"/>
<circle cx="2692.0" cy="1138.5" r="4.0" fill="#808080" />
<circle cx="2692.0" cy="1150.5" r="4.0" fill="#808080" />
<circle cx="2692.0" cy="1162.5" r="4.0" fill="#808080" />
<path d="M2311.62,1271.80 A176.5,176.5 0 0 1 2440.71,1568.00 L2404.70,1534.77 A127.5,127.5 0 0 0 2311.45,1320.80 Z" fill="#e06468" stroke="#ffffff" stroke-width="0.5" stroke-opacity="0.55"/>
<path d="M2440.71,1568.00 A176.5,176.5 0 0 1 2170.79,1555.50 L2209.71,1525.74 A127.5,127.5 0 0 0 2404.70,1534.77 Z" fill="#da4d4f" stroke="#ffffff" stroke-width="0.5" stroke-opacity="0.55"/>
<path d="M2170.79,1555.50 A176.5,176.5 0 0 1 2310.38,1271.80 L2310.55,1320.80 A127.5,127.5 0 0 0 2209.71,1525.74 Z" fill="#d33132" stroke="#ffffff" stroke-width="0.5" stroke-opacity="0.55"/>
<text x="2244.86" y="1452.0" font-size="50.00" fill="#111111" textLength="132.60" lengthAdjust="spacingAndGlyphs" font-weight="bold">32.5K</text>
<text x="2279.44" y="1488.7" font-size="22.00" fill="#878787" textLength="63.50" lengthAdjust="spacingAndGlyphs" font-weight="bold">TOTAL</text>
<circle cx="2529.0" cy="1367.5" r="10.0" fill="#e57f80" />
<text x="2546.13" y="1374.6" font-size="22.00" fill="#8a8a8a" textLength="72.34" lengthAdjust="spacingAndGlyphs">Default</text>
<circle cx="2529.0" cy="1412.5" r="10.0" fill="#e06467" />
<text x="2546.20" y="1419.6" font-size="22.00" fill="#8a8a8a" textLength="120.71" lengthAdjust="spacingAndGlyphs">High_Spend</text>
<circle cx="2529.0" cy="1457.6" r="10.0" fill="#da4d4f" />
<text x="2546.21" y="1464.7" font-size="22.00" fill="#8a8a8a" textLength="115.19" lengthAdjust="spacingAndGlyphs">Low_Spend</text>
<circle cx="2529.0" cy="1502.6" r="10.0" fill="#d33132" />
<text x="2546.18" y="1509.7" font-size="22.00" fill="#8a8a8a" textLength="142.75" lengthAdjust="spacingAndGlyphs">Medium_Spen</text>
<text x="2548.0" y="1537.9" font-size="22.00" fill="#8a8a8a">d</text>
<text x="804.57" y="1813.5" font-size="30.09" fill="#111111" textLength="347.54" lengthAdjust="spacingAndGlyphs" stroke="#111111" stroke-width="0.8">Education against Segment</text>
<path d="M1265.33,1813.40 A11.70,11.70 0 1 1 1273.15,1806.48" fill="none" stroke="#0fa84e" stroke-width="3.10" stroke-linecap="round"/>
<path d="M1267.80,1803.80 L1276.50,1809.40 L1269.30,1811.60 Z" fill="#0fa84e" stroke="#0fa84e" stroke-width="1.20" stroke-linejoin="round"/>
<path d="M1316.10,1809.90 H1314.10 Q1311.90,1809.90 1311.90,1807.70 V1789.00 Q1311.90,1786.80 1314.10,1786.80 H1336.40 Q1338.60,1786.80 1338.60,1789.00 V1796.60" fill="none" stroke="#6b7680" stroke-width="2.6" stroke-linecap="round" stroke-linejoin="round"/>
<line x1="1311.9" y1="1791.1" x2="1338.6" y2="1791.1" stroke="#6b7680" stroke-width="2.4" stroke-linecap="butt"/>
<path d="M1325.05,1817.47 A10.1,10.1 0 0 1 1325.05,1800.33" fill="none" stroke="#6b7680" stroke-width="2.5" stroke-linecap="round"/>
<path d="M1335.75,1800.33 A10.1,10.1 0 0 1 1335.75,1817.47" fill="none" stroke="#6b7680" stroke-width="2.5" stroke-linecap="round"/>
<path d="M1332.10,1800.90 L1325.50,1810.20 L1329.90,1810.20 L1329.50,1817.70 L1335.50,1808.00 L1331.10,1808.00 Z" fill="#1a72c6" stroke="#1a72c6" stroke-width="0.9" stroke-linejoin="round"/>
<circle cx="1379.0" cy="1790.0" r="4.0" fill="#808080" />
<circle cx="1379.0" cy="1802.0" r="4.0" fill="#808080" />
<circle cx="1379.0" cy="1814.0" r="4.0" fill="#808080" />
<rect x="783.0" y="1837.0" width="623.0" height="2.0" fill="#dde2e5" rx="0" />
<text x="1027.01" y="1893.7" font-size="22.00" fill="#8a8a8a" textLength="178.75" lengthAdjust="spacingAndGlyphs">Segment - Current</text>
<text x="1467.75" y="1813.0" font-size="24.00" fill="#111111" textLength="162.57" lengthAdjust="spacingAndGlyphs" stroke="#111111" stroke-width="0.75">Average Spend</text>
<path d="M2578.33,1813.40 A11.70,11.70 0 1 1 2586.15,1806.48" fill="none" stroke="#0fa84e" stroke-width="3.10" stroke-linecap="round"/>
<path d="M2580.80,1803.80 L2589.50,1809.40 L2582.30,1811.60 Z" fill="#0fa84e" stroke="#0fa84e" stroke-width="1.20" stroke-linejoin="round"/>
<path d="M2629.10,1809.90 H2627.10 Q2624.90,1809.90 2624.90,1807.70 V1789.00 Q2624.90,1786.80 2627.10,1786.80 H2649.40 Q2651.60,1786.80 2651.60,1789.00 V1796.60" fill="none" stroke="#6b7680" stroke-width="2.6" stroke-linecap="round" stroke-linejoin="round"/>
<line x1="2624.9" y1="1791.1" x2="2651.6" y2="1791.1" stroke="#6b7680" stroke-width="2.4" stroke-linecap="butt"/>
<path d="M2638.05,1817.47 A10.1,10.1 0 0 1 2638.05,1800.33" fill="none" stroke="#6b7680" stroke-width="2.5" stroke-linecap="round"/>
<path d="M2648.75,1800.33 A10.1,10.1 0 0 1 2648.75,1817.47" fill="none" stroke="#6b7680" stroke-width="2.5" stroke-linecap="round"/>
<path d="M2645.10,1800.90 L2638.50,1810.20 L2642.90,1810.20 L2642.50,1817.70 L2648.50,1808.00 L2644.10,1808.00 Z" fill="#1a72c6" stroke="#1a72c6" stroke-width="0.9" stroke-linejoin="round"/>
<circle cx="2692.0" cy="1790.0" r="4.0" fill="#808080" />
<circle cx="2692.0" cy="1802.0" r="4.0" fill="#808080" />
<circle cx="2692.0" cy="1814.0" r="4.0" fill="#808080" />
<line x1="1534.0" y1="1859.0" x2="2696.0" y2="1859.0" stroke="#e9e9e9" stroke-width="2" stroke-linecap="butt"/>
<line x1="1592.3" y1="1859.0" x2="1592.3" y2="1920.0" stroke="#e9e9e9" stroke-width="2" stroke-linecap="butt"/>
<line x1="1708.7" y1="1859.0" x2="1708.7" y2="1920.0" stroke="#e9e9e9" stroke-width="2" stroke-linecap="butt"/>
<line x1="1825.1" y1="1859.0" x2="1825.1" y2="1920.0" stroke="#e9e9e9" stroke-width="2" stroke-linecap="butt"/>
<line x1="1941.5" y1="1859.0" x2="1941.5" y2="1920.0" stroke="#e9e9e9" stroke-width="2" stroke-linecap="butt"/>
<line x1="2057.9" y1="1859.0" x2="2057.9" y2="1920.0" stroke="#e9e9e9" stroke-width="2" stroke-linecap="butt"/>
<line x1="2174.3" y1="1859.0" x2="2174.3" y2="1920.0" stroke="#e9e9e9" stroke-width="2" stroke-linecap="butt"/>
<line x1="2290.7" y1="1859.0" x2="2290.7" y2="1920.0" stroke="#e9e9e9" stroke-width="2" stroke-linecap="butt"/>
<line x1="2407.1" y1="1859.0" x2="2407.1" y2="1920.0" stroke="#e9e9e9" stroke-width="2" stroke-linecap="butt"/>
<line x1="2523.5" y1="1859.0" x2="2523.5" y2="1920.0" stroke="#e9e9e9" stroke-width="2" stroke-linecap="butt"/>
<line x1="2639.9" y1="1859.0" x2="2639.9" y2="1920.0" stroke="#e9e9e9" stroke-width="2" stroke-linecap="butt"/>
<line x1="1523.0" y1="1859.0" x2="1534.0" y2="1859.0" stroke="#777777" stroke-width="2" stroke-linecap="butt"/>
<line x1="1533.7" y1="1858.0" x2="1533.7" y2="1920.0" stroke="#777777" stroke-width="2" stroke-linecap="butt"/>
<text x="1474.49" y="1866.6" font-size="20.25" fill="#1a1a1a" textLength="40.73" lengthAdjust="spacingAndGlyphs">1.2K</text>
<rect x="2.0" y="1910.0" width="2770.0" height="8.0" fill="#f8f8f8" rx="0" />
<rect x="0.0" y="1918.0" width="2774.0" height="2.0" fill="#d4d4d4" rx="0" />
</g>
</svg>
</body></html>
